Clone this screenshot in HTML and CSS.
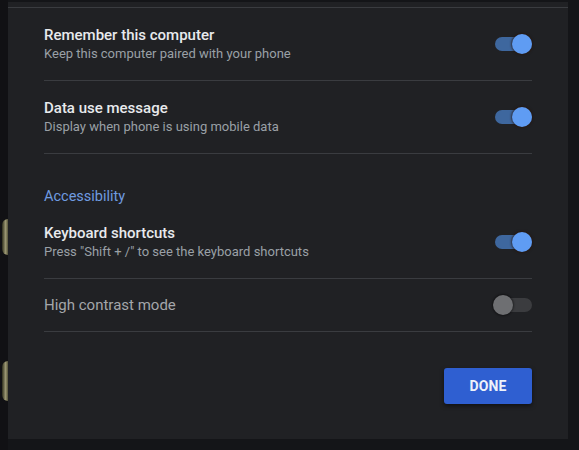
FILE: index.html
```html
<!DOCTYPE html>
<html>
<head>
<meta charset="utf-8">
<link rel="stylesheet" href="styles.css">
</head>
<body>
<div class="screen">
  <div class="backdrop">
    <div class="blob blob-one"></div>
    <div class="blob blob-two"></div>
  </div>
  <div class="dialog">
    <div class="content">
      <div class="row">
        <div class="text">
          <div class="title">Remember this computer</div>
          <div class="sub">Keep this computer paired with your phone</div>
        </div>
        <div class="toggle on"><span class="track"></span><span class="knob"></span></div>
      </div>
      <div class="row">
        <div class="text">
          <div class="title">Data use message</div>
          <div class="sub">Display when phone is using mobile data</div>
        </div>
        <div class="toggle on"><span class="track"></span><span class="knob"></span></div>
      </div>
      <div class="section">Accessibility</div>
      <div class="row after-section">
        <div class="text">
          <div class="title">Keyboard shortcuts</div>
          <div class="sub">Press "Shift + /" to see the keyboard shortcuts</div>
        </div>
        <div class="toggle on"><span class="track"></span><span class="knob"></span></div>
      </div>
      <div class="row short">
        <div class="text">
          <div class="title dim">High contrast mode</div>
        </div>
        <div class="toggle off"><span class="track"></span><span class="knob"></span></div>
      </div>
      <div class="footer">
        <button class="done">DONE</button>
      </div>
    </div>
  </div>
</div>
</body>
</html>
```

FILE: styles.css
```css
html, body {
  margin: 0;
  padding: 0;
  background: #141518;
  font-family: Roboto, "Liberation Sans", Arial, sans-serif;
}
.screen {
  width: 579px;
  height: 450px;
  display: flex;
  overflow: hidden;
  background: #141518;
}
.backdrop {
  width: 8px;
  flex: none;
  display: flex;
  flex-direction: column;
  align-items: flex-end;
  background: #111114;
}
.blob {
  width: 6px;
  border-radius: 6px 0 0 6px;
  background: linear-gradient(90deg, #2e2e1c, #9c9874 60%, #55533a);
}
.blob-one { margin-top: 219px; height: 36px; }
.blob-two { margin-top: 106px; height: 40px; }
.dialog {
  margin-top: 2px;
  width: 560px;
  height: 437px;
  flex: none;
  background: #202124;
}
.content {
  padding: 0 36px;
  margin-top: 5px;
  border-top: 1px solid #3a3c40;
}
.row {
  min-height: 72px;
  display: flex;
  align-items: center;
  justify-content: space-between;
  border-bottom: 1px solid #3a3c40;
}
.row.short { min-height: 52px; }
.row.after-section {
  min-height: 0;
  padding: 16px 0 17px;
}
.text { display: flex; flex-direction: column; }
.title {
  color: #e8eaed;
  font-size: 15px;
  font-weight: 500;
  line-height: 20px;
}
.title.dim { color: #a4a6aa; font-weight: 400; }
.sub {
  color: #9aa0a6;
  font-size: 13px;
  line-height: 18px;
}
.section {
  color: #6f9be0;
  font-size: 14.5px;
  line-height: 20px;
  padding-top: 33px;
}
.toggle {
  position: relative;
  width: 39px;
  height: 20px;
  flex: none;
}
.track {
  position: absolute;
  left: 2px;
  top: 3px;
  width: 37px;
  height: 14px;
  border-radius: 7px;
  background: #3e679e;
}
.knob {
  position: absolute;
  top: 0;
  left: 19px;
  width: 20px;
  height: 20px;
  border-radius: 50%;
  background: #5f9cf3;
  box-shadow: 0 0 2px 1px rgba(40, 20, 10, 0.6);
}
.toggle.off .track { background: #3b3c3f; }
.toggle.off .knob {
  left: 0;
  background: #6e6f72;
  box-shadow: 0 0 2px 1px rgba(0, 0, 0, 0.4);
}
.footer {
  display: flex;
  justify-content: flex-end;
  padding-top: 36px;
}
.done {
  width: 88px;
  height: 36px;
  border: none;
  border-radius: 3px;
  background: #2f5fd1;
  color: #eef2fa;
  font-family: Roboto, "Liberation Sans", Arial, sans-serif;
  font-size: 14px;
  font-weight: 700;
  letter-spacing: 0.1px;
  box-shadow: 0 2px 4px rgba(0, 0, 0, 0.5);
}
```
